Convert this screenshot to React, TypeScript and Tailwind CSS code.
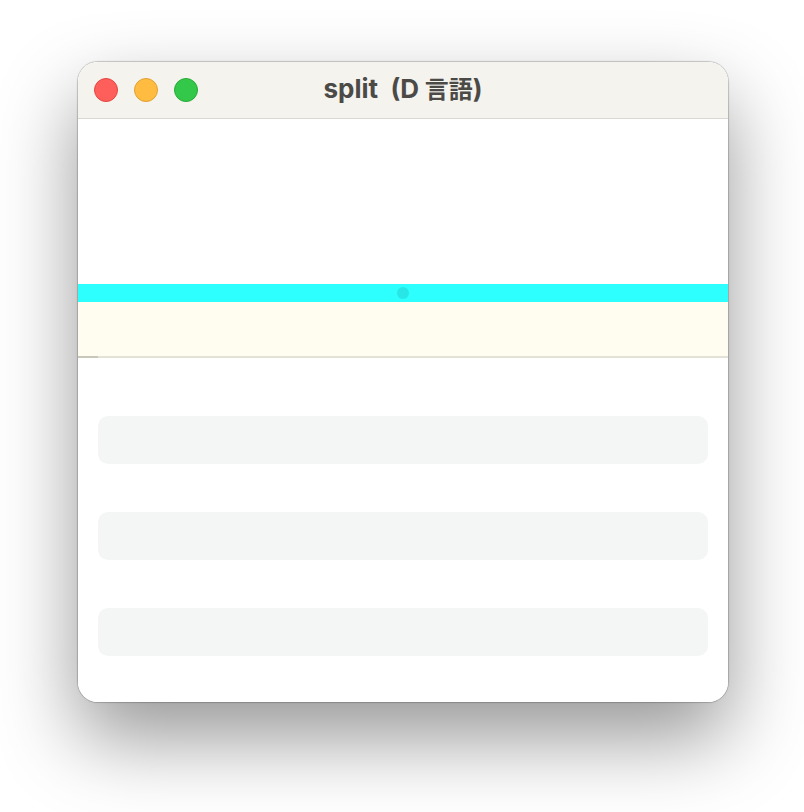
const rows = ['row-1', 'row-2', 'row-3'];

function TitleBar() {
  return (
    <header className="grid h-[57px] grid-cols-[1fr_auto_1fr] items-center border-b border-[#d9d8d3] bg-[#f4f3ee] px-4">
      <div className="flex gap-4">
        <button
          type="button"
          aria-label="Close"
          className="h-6 w-6 rounded-full border border-[#e2463f] bg-[#ff5f5a]"
        />
        <button
          type="button"
          aria-label="Minimize"
          className="h-6 w-6 rounded-full border border-[#dfa032] bg-[#ffbc40]"
        />
        <button
          type="button"
          aria-label="Zoom"
          className="h-6 w-6 rounded-full border border-[#27aa35] bg-[#34c84a]"
        />
      </div>
      <h1 className="pb-px font-['Inter','Noto_Sans_CJK_JP',sans-serif] text-[26px] leading-8 font-bold whitespace-pre text-[#4b4a47]">
        split  (D<span className="text-2xl leading-8"> 言語</span>)
      </h1>
    </header>
  );
}

function Divider() {
  return (
    <div
      role="separator"
      aria-orientation="horizontal"
      className="flex h-[18px] cursor-row-resize items-center justify-center bg-[#2dffff]"
    >
      <span className="h-3 w-3 rounded-full bg-[#29e6e6]" />
    </div>
  );
}

export default function App() {
  return (
    <main className="min-h-screen overflow-hidden bg-white pt-[62px] pr-[76px] pb-[110px] pl-[78px]">
      <div className="rounded-[20px] shadow-[0_0_1px_1px_rgba(0,0,0,0.2),0_36px_80px_rgba(0,0,0,0.41)]">
        <div className="overflow-hidden rounded-[20px] bg-white">
          <TitleBar />
          <section className="h-[165px] bg-white" />
          <Divider />
          <section>
            <div className="flex h-14 items-end bg-[#fffdf0]">
              <div className="h-[2px] w-5 bg-[#c9c7ba]" />
              <div className="h-[2px] flex-1 bg-[#e4e2d6]" />
            </div>
            <ul className="flex flex-col gap-12 px-5 pt-[58px] pb-[46px]">
              {rows.map((row) => (
                <li key={row} className="h-12 rounded-[10px] bg-[#f4f6f5]" />
              ))}
            </ul>
          </section>
        </div>
      </div>
    </main>
  );
}
